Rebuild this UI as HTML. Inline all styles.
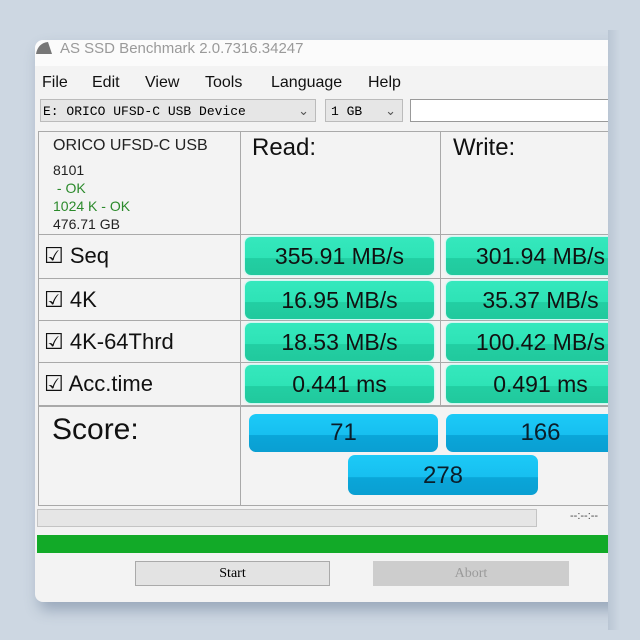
<!DOCTYPE html>
<html><head><style>
body{margin:0;width:640px;height:640px;background:#cdd7e2;overflow:hidden;font-family:"Liberation Sans",sans-serif;position:relative}
.win{position:absolute;left:35px;top:40px;width:590px;height:562px;background:#f3f3f3;border-radius:8px;box-shadow:4px 8px 14px rgba(90,110,140,.45);overflow:hidden}
.clipR{position:absolute;left:608px;top:30px;width:40px;height:600px;background:linear-gradient(90deg,#bac6d4,#cdd7e2 12px)}
.a{position:absolute}
.t{color:#9a9a9a;font-size:15px;left:60px;top:40px}
.menu{top:74px;font-size:16px;color:#111}
.line{background:#a9a9a9;position:absolute}
.box{position:absolute;border-radius:6px;background:linear-gradient(#35e8bd 0,#2ee3b6 55%,#22cfa3 56%,#21c99d 100%);box-shadow:0 0 2px #8fe;text-align:center;font-size:23px;color:#111;line-height:38px}
.sc{position:absolute;border-radius:7px;background:linear-gradient(#1ccaf7 0,#17bff0 55%,#0aa6d9 56%,#0a9fd2 100%);text-align:center;font-size:24px;color:#0b1e2a;line-height:38px}
.lab{position:absolute;left:44px;font-size:22px;color:#111}
.mono{font-family:"Liberation Mono",monospace;font-size:13px}
</style></head><body>
<div class="win"><div style="height:26px;background:#fbfbfb"></div></div>
<svg class="a" style="left:34px;top:40px" width="20" height="16"><path d="M2 14 Q4 3 14 2 L18 14Z" fill="#777"/></svg>
<div class="a t">AS SSD Benchmark 2.0.7316.34247</div>
<div class="a menu" style="left:42px">File</div>
<div class="a menu" style="left:92px">Edit</div>
<div class="a menu" style="left:145px">View</div>
<div class="a menu" style="left:205px">Tools</div>
<div class="a menu" style="left:271px">Language</div>
<div class="a menu" style="left:368px">Help</div>
<div class="a mono" style="left:40px;top:99px;width:276px;height:23px;background:#e6e6e6;border:1px solid #bbb;line-height:23px;padding-left:2px;box-sizing:border-box">E: ORICO UFSD-C USB Device<span style="position:absolute;right:6px;color:#555">&#8964;</span></div>
<div class="a mono" style="left:325px;top:99px;width:78px;height:23px;background:#e6e6e6;border:1px solid #bbb;line-height:23px;padding-left:5px;box-sizing:border-box">1 GB<span style="position:absolute;right:6px;color:#555">&#8964;</span></div>
<div class="a" style="left:410px;top:99px;width:210px;height:23px;background:#fff;border:1px solid #999;box-sizing:border-box"></div>
<div class="line" style="left:38px;top:131px;width:580px;height:1px"></div>
<div class="line" style="left:38px;top:131px;width:1px;height:375px"></div>
<div class="line" style="left:240px;top:131px;width:1px;height:375px"></div>
<div class="line" style="left:440px;top:131px;width:1px;height:275px"></div>
<div class="line" style="left:38px;top:234px;width:580px;height:1px"></div>
<div class="line" style="left:38px;top:278px;width:580px;height:1px"></div>
<div class="line" style="left:38px;top:320px;width:580px;height:1px"></div>
<div class="line" style="left:38px;top:362px;width:580px;height:1px"></div>
<div class="line" style="left:38px;top:405px;width:580px;height:2px"></div>
<div class="line" style="left:38px;top:505px;width:580px;height:1px"></div>
<div class="a" style="left:53px;top:137px;font-size:16px;color:#222">ORICO UFSD-C USB</div>
<div class="a" style="left:53px;top:161px;font-size:14px;color:#222;line-height:18px">8101<br><span style="color:#2b8a2b">&nbsp;- OK</span><br><span style="color:#2b8a2b">1024 K - OK</span><br>476.71 GB</div>
<div class="a" style="left:252px;top:134px;font-size:24px;color:#111">Read:</div>
<div class="a" style="left:453px;top:134px;font-size:24px;color:#111">Write:</div>
<div class="lab" style="top:243px">&#9745; Seq</div>
<div class="lab" style="top:287px">&#9745; 4K</div>
<div class="lab" style="top:329px">&#9745; 4K-64Thrd</div>
<div class="lab" style="top:371px">&#9745; Acc.time</div>
<div class="box" style="left:245px;top:237px;width:189px;height:38px">355.91 MB/s</div>
<div class="box" style="left:446px;top:237px;width:189px;height:38px">301.94 MB/s</div>
<div class="box" style="left:245px;top:281px;width:189px;height:38px">16.95 MB/s</div>
<div class="box" style="left:446px;top:281px;width:189px;height:38px">35.37 MB/s</div>
<div class="box" style="left:245px;top:323px;width:189px;height:38px">18.53 MB/s</div>
<div class="box" style="left:446px;top:323px;width:189px;height:38px">100.42 MB/s</div>
<div class="box" style="left:245px;top:365px;width:189px;height:38px">0.441 ms</div>
<div class="box" style="left:446px;top:365px;width:189px;height:38px">0.491 ms</div>
<div class="a" style="left:52px;top:413px;font-size:30px;color:#111">Score:</div>
<div class="sc" style="left:249px;top:414px;width:189px;height:38px">71</div>
<div class="sc" style="left:446px;top:414px;width:189px;height:38px">166</div>
<div class="sc" style="left:348px;top:455px;width:190px;height:40px;line-height:42px">278</div>
<div class="a" style="left:37px;top:509px;width:500px;height:18px;background:#e6e6e6;border:1px solid #c4c4c4;box-sizing:border-box"></div>
<div class="a" style="left:570px;top:510px;font-size:11px;color:#444">--:--:--</div>
<div class="a" style="left:37px;top:535px;width:590px;height:18px;background:#12aa28"></div>
<div class="a mono" style="left:135px;top:561px;width:195px;height:25px;background:#e3e3e3;border:1px solid #aaa;box-sizing:border-box;text-align:center;line-height:23px;font-family:'Liberation Serif',serif;font-size:14px">Start</div>
<div class="a mono" style="left:373px;top:561px;width:196px;height:25px;background:#cdcdcd;box-sizing:border-box;text-align:center;line-height:25px;color:#9a9a9a;font-family:'Liberation Serif',serif;font-size:14px">Abort</div>
<div class="clipR"></div>
</body></html>
